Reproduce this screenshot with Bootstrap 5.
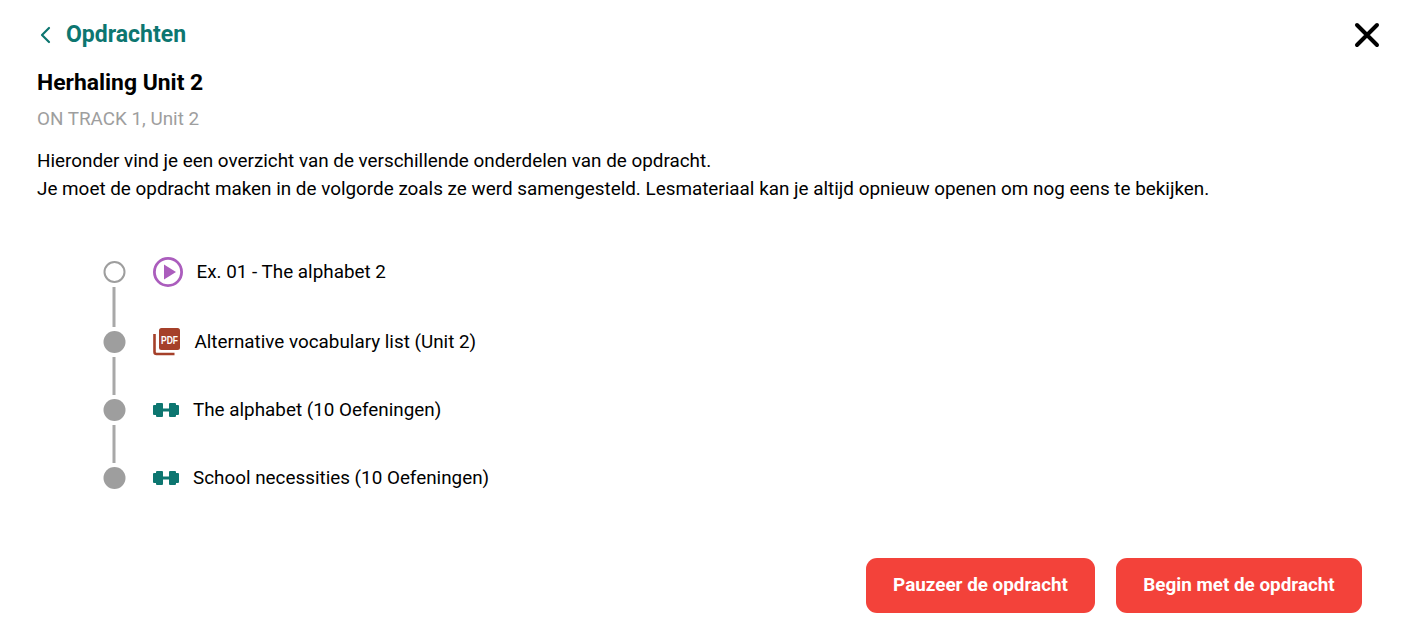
<!DOCTYPE html>
<html lang="nl">
<head>
  <meta charset="UTF-8">
  <meta name="viewport" content="width=device-width, initial-scale=1.0">
  <title>Herhaling Unit 2</title>
  <link href="https://cdn.jsdelivr.net/npm/bootstrap@5.3.2/dist/css/bootstrap.min.css" rel="stylesheet">
  <style>
    html, body { height: 100%; }
    body { font-family: Roboto, "Liberation Sans", sans-serif; color: #000; background: #fff; overflow: hidden; }
    .page-wrap { height: 637px; padding: 19px 26px 24px 37px; }
    .back-link { color: #0d7670; font-size: 23px; font-weight: 700; line-height: 30px; text-decoration: none; margin-top: 1px; }
    .back-link svg { margin-right: 13px; }
    .close-btn { background: none; border: 0; padding: 0; line-height: 0; margin-top: 3px; }
    .header-row { height: 49px; }
    .task-title { font-size: 22.9px; font-weight: 700; line-height: 30px; margin: 0; }
    .task-sub { color: #9e9e9e; font-size: 18.85px; line-height: 28px; margin: 7px 0 0; }
    .task-intro { font-size: 18.87px; line-height: 28px; margin: 14px 0 0; }
    .step-list { margin: 58px 0 0 66px; padding: 0; list-style: none; }
    .step-row { display: flex; height: 68px; }
    .step-row.first { height: 70px; }
    .step-row.last { height: 22px; }
    .step-marker { width: 23px; display: flex; flex-direction: column; align-items: center; margin-right: 27px; transform: translateX(-.5px); }
    .step-dot { width: 22px; height: 22px; flex: none; border-radius: 50%; background: #9e9e9e; }
    .step-dot.open { background: #fff; border: 2px solid #9e9e9e; }
    .step-line { width: 3px; flex: 1; background: #a8a8a8; margin: 4px 0; }
    .step-label { display: flex; align-items: center; height: 22px; font-size: 18.85px; white-space: nowrap; }
    .step-label svg { flex: none; }
    .step-icon-play { margin-right: 14px; margin-left: -.5px; }
    .step-icon-pdf { margin-right: 13.5px; }
    .step-icon-gym { margin-right: 14px; }
    .action-row { gap: 21px; margin-right: 18px; }
    .action-btn { background: #f3423a; border: 0; color: #fff; font-size: 18.85px; font-weight: 700; height: 55px; border-radius: 11px; padding: 0; }
    .action-btn:hover { background: #e53935; color: #fff; }
    .btn-pause { width: 229px; }
    .btn-start { width: 246px; }
  </style>
</head>
<body>
  <div class="page-wrap d-flex flex-column">
    <div class="header-row d-flex justify-content-between align-items-start">
      <a class="back-link d-flex align-items-center" href="#">
        <svg width="16" height="18" viewBox="0 0 16 18" fill="none" stroke="#0d7670" stroke-width="2.2" stroke-linecap="round" stroke-linejoin="round"><path d="M12 2 5 9l7 7"/></svg>
        Opdrachten
      </a>
      <button class="close-btn" type="button" aria-label="Sluiten">
        <svg width="26" height="26" viewBox="0 0 26 26" fill="none" stroke="#000" stroke-width="4" stroke-linecap="round"><path d="M3 3l20 20M23 3 3 23"/></svg>
      </button>
    </div>
    <h1 class="task-title">Herhaling Unit 2</h1>
    <p class="task-sub">ON TRACK 1, Unit 2</p>
    <p class="task-intro">Hieronder vind je een overzicht van de verschillende onderdelen van de opdracht.<br>Je moet de opdracht maken in de volgorde zoals ze werd samengesteld. Lesmateriaal kan je altijd opnieuw openen om nog eens te bekijken.</p>

    <ul class="step-list">
      <li class="step-row first">
        <div class="step-marker"><span class="step-dot open"></span><span class="step-line"></span></div>
        <div class="step-label">
          <svg class="step-icon-play" width="30" height="30" viewBox="0 0 30 30"><circle cx="15" cy="15" r="13.6" fill="none" stroke="#ab5dbd" stroke-width="2.8"/><path d="M11 7.5 23 15 11 22.5z" fill="#ab5dbd"/></svg>
          Ex. 01 - The alphabet 2
        </div>
      </li>
      <li class="step-row">
        <div class="step-marker"><span class="step-dot"></span><span class="step-line"></span></div>
        <div class="step-label">
          <svg class="step-icon-pdf" width="28" height="28" viewBox="0 0 28 28"><path d="M1.5 6v18a2 2 0 0 0 2 2h18" fill="none" stroke="#a5402a" stroke-width="2.6"/><rect x="6" y="0" width="21" height="22" rx="2.5" fill="#a5402a"/><text transform="translate(16.5 15.500) scale(1 1.25)" text-anchor="middle" font-family="'Liberation Sans',sans-serif" font-size="8.5" font-weight="700" fill="#fff">PDF</text></svg>
          Alternative vocabulary list (Unit 2)
        </div>
      </li>
      <li class="step-row">
        <div class="step-marker"><span class="step-dot"></span><span class="step-line"></span></div>
        <div class="step-label">
          <svg class="step-icon-gym" width="26" height="16" viewBox="0 0 26 16" fill="#0d7670"><path d="M1 3h2V2a1 1 0 0 1 1-1h5a1 1 0 0 1 1 1v4.500h6V2a1 1 0 0 1 1-1h5a1 1 0 0 1 1 1v1h2a1 1 0 0 1 1 1v8a1 1 0 0 1-1 1h-2v1a1 1 0 0 1-1 1h-5a1 1 0 0 1-1-1V9.500h-6V14a1 1 0 0 1-1 1H4a1 1 0 0 1-1-1v-1H1a1 1 0 0 1-1-1V4a1 1 0 0 1 1-1z"/></svg>
          The alphabet (10 Oefeningen)
        </div>
      </li>
      <li class="step-row last">
        <div class="step-marker"><span class="step-dot"></span></div>
        <div class="step-label">
          <svg class="step-icon-gym" width="26" height="16" viewBox="0 0 26 16" fill="#0d7670"><path d="M1 3h2V2a1 1 0 0 1 1-1h5a1 1 0 0 1 1 1v4.500h6V2a1 1 0 0 1 1-1h5a1 1 0 0 1 1 1v1h2a1 1 0 0 1 1 1v8a1 1 0 0 1-1 1h-2v1a1 1 0 0 1-1 1h-5a1 1 0 0 1-1-1V9.500h-6V14a1 1 0 0 1-1 1H4a1 1 0 0 1-1-1v-1H1a1 1 0 0 1-1-1V4a1 1 0 0 1 1-1z"/></svg>
          School necessities (10 Oefeningen)
        </div>
      </li>
    </ul>

    <div class="action-row d-flex justify-content-end mt-auto">
      <button class="btn action-btn btn-pause" type="button">Pauzeer de opdracht</button>
      <button class="btn action-btn btn-start" type="button">Begin met de opdracht</button>
    </div>
  </div>
  <script src="https://cdn.jsdelivr.net/npm/bootstrap@5.3.2/dist/js/bootstrap.bundle.min.js"></script>
</body>
</html>
